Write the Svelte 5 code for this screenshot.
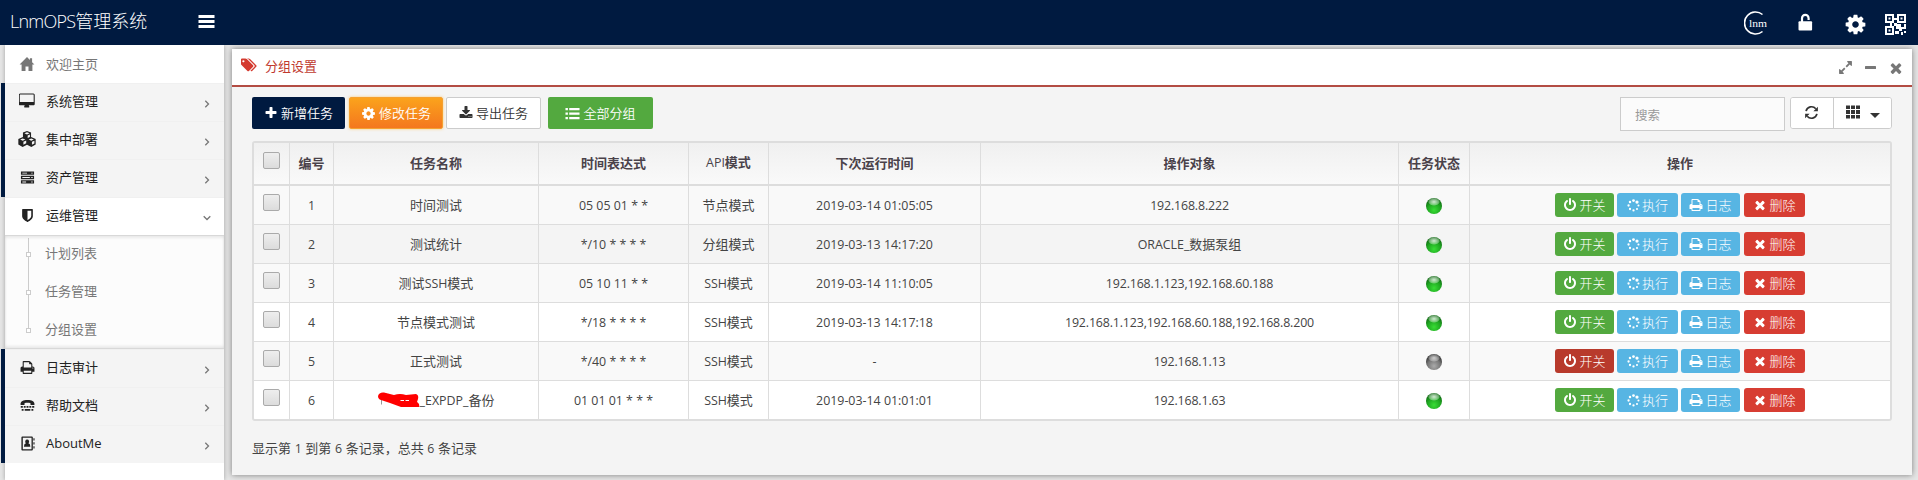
<script>
  const menu = [
    { icon: 'desktop', label: '系统管理' },
    { icon: 'cubes', label: '集中部署' },
    { icon: 'server', label: '资产管理' },
    { icon: 'shield', label: '运维管理', open: true, children: ['计划列表', '任务管理', '分组设置'] },
    { icon: 'print', label: '日志审计' },
    { icon: 'tty', label: '帮助文档' },
    { icon: 'book', label: 'AboutMe' }
  ];

  const columns = [
    { w: 44, t: '编号' },
    { w: 205, t: '任务名称' },
    { w: 150, t: '时间表达式' },
    { w: 80, t: 'API模式' },
    { w: 212, t: '下次运行时间' },
    { w: 418, t: '操作对象' },
    { w: 71, t: '任务状态' },
    { w: 420, t: '操作' }
  ];

  const rows = [
    { name: '时间测试', cron: '05 05 01 * *', mode: '节点模式', next: '2019-03-14 01:05:05', target: '192.168.8.222', on: true, bg: 'light' },
    { name: '测试统计', cron: '*/10 * * * *', mode: '分组模式', next: '2019-03-13 14:17:20', target: 'ORACLE_数据泵组', on: true, bg: 'hover' },
    { name: '测试SSH模式', cron: '05 10 11 * *', mode: 'SSH模式', next: '2019-03-14 11:10:05', target: '192.168.1.123,192.168.60.188', on: true, bg: 'light' },
    { name: '节点模式测试', cron: '*/18 * * * *', mode: 'SSH模式', next: '2019-03-13 14:17:18', target: '192.168.1.123,192.168.60.188,192.168.8.200', on: true, bg: 'plain' },
    { name: '正式测试', cron: '*/40 * * * *', mode: 'SSH模式', next: '-', target: '192.168.1.13', on: false, bg: 'light' },
    { name: '_EXPDP_备份', masked: true, cron: '01 01 01 * * *', mode: 'SSH模式', next: '2019-03-14 01:01:01', target: '192.168.1.63', on: true, bg: 'plain' }
  ];

  // Icons drawn on the 1792-unit grid
  const paths = {
    desktop: 'M1728 992v-832q0-13-9.5-22.5t-22.5-9.5h-1600q-13 0-22.5 9.5t-9.5 22.5v832q0 13 9.5 22.5t22.5 9.5h1600q13 0 22.5-9.5t9.5-22.5zm128-832v1088q0 66-47 113t-113 47h-544q0 37 16 77.5t32 71 16 43.5q0 26-19 45t-45 19h-512q-26 0-45-19t-19-45q0-14 16-44t32-70 16-78h-544q-66 0-113-47t-47-113v-1088q0-66 47-113t113-47h1600q66 0 113 47t47 113z',
    plus: 'M1600 736v192q0 40-28 68t-68 28h-416v416q0 40-28 68t-68 28h-192q-40 0-68-28t-28-68v-416h-416q-40 0-68-28t-28-68v-192q0-40 28-68t68-28h416v-416q0-40 28-68t68-28h192q40 0 68 28t28 68v416h416q40 0 68 28t28 68z',
    cog: 'M1152 896q0-106-75-181t-181-75-181 75-75 181 75 181 181 75 181-75 75-181zm512-109v222q0 12-8 23t-20 13l-185 28q-19 54-39 91 35 50 107 138 10 12 10 25t-9 23q-27 37-99 108t-94 71q-12 0-26-9l-138-108q-44 23-91 38-16 136-29 186-7 28-36 28h-222q-14 0-24.5-8.5t-11.5-21.5l-28-184q-49-16-90-37l-141 107q-10 9-25 9-14 0-25-11-126-114-165-168-7-10-7-23 0-12 8-23 15-21 51-66.5t54-70.5q-27-50-41-99l-183-27q-13-2-21-12.5t-8-23.5v-222q0-12 8-23t19-13l186-28q14-46 39-92-40-57-107-138-10-12-10-24 0-10 9-23 26-36 98.5-107.5t94.5-71.5q13 0 26 10l138 107q44-23 91-38 16-136 29-186 7-28 36-28h222q14 0 24.5 8.5t11.5 21.5l28 184q49 16 90 37l142-107q9-9 24-9 13 0 25 10 129 119 165 170 7 8 7 22 0 12-8 23-15 21-51 66.5t-54 70.5q26 50 41 98l183 28q13 2 21 12.5t8 23.5z',
    download: 'M1344 1344q0-26-19-45t-45-19-45 19-19 45 19 45 45 19 45-19 19-45zm256 0q0-26-19-45t-45-19-45 19-19 45 19 45 45 19 45-19 19-45zm128-224v320q0 40-28 68t-68 28h-1472q-40 0-68-28t-28-68v-320q0-40 28-68t68-28h465l135 136q58 56 136 56t136-56l136-136h464q40 0 68 28t28 68zm-325-569q17 41-14 70l-448 448q-18 19-45 19t-45-19l-448-448q-31-29-14-70 17-39 59-39h256v-448q0-26 19-45t45-19h256q26 0 45 19t19 45v448h256q42 0 59 39z',
    tags: 'M384 448q0-53-37.5-90.5t-90.5-37.5-90.5 37.5-37.5 90.5 37.5 90.5 90.5 37.5 90.5-37.5 37.5-90.5zm1067 576q0 53-37 90l-491 492q-39 37-91 37-53 0-90-37l-715-716q-38-37-64.5-101t-26.5-117v-416q0-52 38-90t90-38h416q53 0 117 26.5t102 64.5l715 714q37 39 37 91zm384 0q0 53-37 90l-491 492q-39 37-91 37-36 0-59-14t-53-45l470-470q37-37 37-90 0-52-37-91l-715-714q-38-38-102-64.5t-117-26.5h224q53 0 117 26.5t102 64.5l715 714q37 39 37 91z',
    times: 'M1490 1322q0 40-28 68l-136 136q-28 28-68 28t-68-28l-294-294-294 294q-28 28-68 28t-68-28l-136-136q-28-28-28-68t28-68l294-294-294-294q-28-28-28-68t28-68l136-136q28-28 68-28t68 28l294 294 294-294q28-28 68-28t68 28l136 136q28 28 28 68t-28 68l-294 294 294 294q28 28 28 68z',
    power: 'M1664 896q0 156-61 298t-164 245-245 164-298 61-298-61-245-164-164-245-61-298q0-182 80.5-343t226.5-270q43-32 95.5-25t83.5 50q32 42 24.5 94.5t-49.5 84.5q-98 74-151.5 181t-53.5 228q0 104 40.5 198.5t109.5 163.5 163.5 109.5 198.5 40.5 198.5-40.5 163.5-109.5 109.5-163.5 40.5-198.5q0-121-53.5-228t-151.5-181q-42-32-49.5-84.5t24.5-94.5q31-43 84-50t95 25q146 109 226.5 270t80.5 343zm-640-768v640q0 52-38 90t-90 38-90-38-38-90v-640q0-52 38-90t90-38 90 38 38 90z',
    print: 'M448 1536h896v-256h-896v256zm0-640h896v-384h-160q-40 0-68-28t-28-68v-160h-640v640zm1152 64q0-26-19-45t-45-19-45 19-19 45 19 45 45 19 45-19 19-45zm128 0v416q0 13-9.5 22.5t-22.5 9.5h-224v160q0 40-28 68t-68 28h-960q-40 0-68-28t-28-68v-160h-224q-13 0-22.5-9.5t-9.5-22.5v-416q0-79 56.5-135.5t135.5-56.5h64v-544q0-40 28-68t68-28h672q40 0 88 20t76 48l152 152q28 28 48 76t20 88v256h64q79 0 135.5 56.5t56.5 135.5z',
    shield: 'M1344 960v-640h-448v1137q119-63 213-137 235-184 235-360zm192-768v768q0 86-33.5 170.5t-83 150-118 127.5-126.5 103-121 77.5-89.5 49.5-42.5 20q-12 6-26 6t-26-6q-16-7-42.5-20t-89.5-49.5-121-77.5-126.5-103-118-127.5-83-150-33.5-170.5v-768q0-26 19-45t45-19h1152q26 0 45 19t19 45z',
    expand: 'M883 1056q0 13-10 23l-332 332 144 144q19 19 19 45t-19 45-45 19h-448q-26 0-45-19t-19-45v-448q0-26 19-45t45-19 45 19l144 144 332-332q10-10 23-10t23 10l114 114q10 10 10 23zm781-864v448q0 26-19 45t-45 19-45-19l-144-144-332 332q-10 10-23 10t-23-10l-114-114q-10-10-10-23t10-23l332-332-144-144q-19-19-19-45t19-45 45-19h448q26 0 45 19t19 45z'
  };

  // Icons drawn on a 16-unit grid
  const small = {
    home: 'M8 1 .6 8.6h2V15h3.9v-4.6h3V15h3.9V8.6h2l-2.3-2.4V2.2h-2.2v1.9z',
    server: 'M1 1.5h14v3.6H1zM1 6.2h14v3.6H1zM1 10.9h14v3.6H1zM2.5 2.8v1h5v-1zM12 2.8v1h1.5v-1zM2.5 7.5v1h8v-1zM12 7.5v1h1.5v-1zM2.5 12.2v1h4v-1zM12 12.2v1h1.5v-1z',
    tty: 'M8 2C3.500 2 .6 3.700.6 6v1.500h4.200V5.700C6.500 5 9.500 5 11.200 5.700v1.800h4.200V6C15.400 3.700 12.500 2 8 2zM.8 8.600h2.200v1.700H.8zM4 8.600h2v1.700H4zM7 8.600h2v1.700H7zM10 8.600h2v1.700h-2zM13 8.600h2.200v1.700H13zM1.800 11.800h2v1.700h-2zM5 11.800h6v1.700H5zM12.200 11.800h2v1.700h-2z',
    book: 'M2.500.5h10.200q1 0 1 1v13q0 1-1 1H2.500q-1 0-1-1v-13q0-1 1-1zM3 1.900v12.200h9.300V1.900zM14.300 2.500h1.200v2.300h-1.200zM14.300 6.700h1.200V9h-1.200zM14.300 10.900h1.200v2.300h-1.200zM7.650 3.700a2.100 2.300 0 0 1 1.300 4.100q2.100.4 2.100 3.700H4.200q0-3.300 2.100-3.700a2.100 2.300 0 0 1 1.350-4.100z',
    list: 'M.5 2h2.600v2.400H.5zM4.500 2h11v2.400h-11zM.5 6.800h2.600v2.400H.5zM4.500 6.800h11v2.400h-11zM.5 11.600h2.600V14H.5zM4.500 11.600h11V14h-11z',
    th: 'M1 1.500h4v3.500H1zM6 1.500h4v3.500H6zM11 1.500h4v3.500h-4zM1 6h4v4H1zM6 6h4v4H6zM11 6h4v4h-4zM1 11h4v3.500H1zM6 11h4v3.500H6zM11 11h4v3.500h-4z',
    cubes: 'M8 .8 11.600 2.300v4L15.700 8v4.800L11.900 15 8 13 4.100 15 .3 12.800V8l4.100-1.700v-4zM8 1.900 5.700 2.900 8 3.900l2.300-1zM8.600 4.900v2.200l2-.9V4zM4.200 7.500 1.900 8.500l2.300 1 2.300-1zM4.800 10.500v2.600l2.500-1.300V9.400zM11.800 7.500l-2.300 1 2.300 1 2.300-1zM12.400 10.500v2.600l2.200-1.200V9.500z'
  };

  const dots = [
    [8, 1.900, 1.700], [12.300, 3.700, 2], [14.100, 8, 1.300], [12.300, 12.300, 1.300],
    [8, 14.100, 1.400], [3.700, 12.300, 1.400], [1.900, 8, 1.400], [3.700, 3.700, 1.500]
  ];

  // Latin runs are set slightly smaller than the Chinese glyphs beside them
  const runs = (s) => s.match(/[\x00-\x7f]+|[^\x00-\x7f]+/g) ?? [];
  const isLatin = (s) => s.charCodeAt(0) < 128;
</script>

{#snippet ic(name, size = 14)}
  {#if paths[name]}
    <svg class="ic" width={size} height={size} viewBox={name === 'desktop' || name === 'tags' ? '-32 0 1920 1792' : '0 0 1792 1792'}><path fill-rule="evenodd" d={paths[name]} /></svg>
  {:else if name === 'spinner'}
    <svg class="ic" width={size} height={size} viewBox="0 0 16 16">
      {#each dots as [x, y, r]}<circle cx={x} cy={y} {r} />{/each}
    </svg>
  {:else if name === 'refresh'}
    <svg class="ic" width={size} height={size} viewBox="0 0 16 16">
      <path d="M2.200 6.500A6 6 0 0 1 12.600 4M13.800 9.500A6 6 0 0 1 3.400 12" fill="none" stroke="currentColor" stroke-width="1.800" />
      <path d="M14.800 1.800v4.800H10zM1.200 14.200V9.400H6z" />
    </svg>
  {:else}
    <svg class="ic" width={size} height={size} viewBox="0 0 16 16"><path fill-rule="evenodd" d={small[name]} /></svg>
  {/if}
{/snippet}

{#snippet txt(s)}<span>{#each runs(s) as r}{#if isLatin(r)}<span class="lat">{r}</span>{:else}{r}{/if}{/each}</span>{/snippet}

<div class="page">
  <header class="top">
    <div class="brand"><span class="brand-lat">LnmOPS</span>管理系统</div>
    <svg class="bars" width="17" height="14" viewBox="0 0 17 14"><path d="M.5 0h16v3H.5zM.5 5h16v3H.5zM.5 10h16v3H.5z" /></svg>
    <nav class="tools">
      <svg width="23" height="25" viewBox="0 0 23 25">
        <path d="M18.500 3.500A11 11 0 1 0 18.500 20.500" fill="none" stroke="#fff" stroke-width="1.600" />
        <text x="5" y="15.500" font-size="10.500" font-family="Liberation Serif, serif" textLength="18" lengthAdjust="spacingAndGlyphs">lnm</text>
      </svg>
      <svg class="lock" width="15" height="18" viewBox="0 0 15 18">
        <path d="M4 9V5.200a3.300 3.300 0 0 1 6.600 0V7" fill="none" stroke="#fff" stroke-width="2.200" />
        <path d="M1.500 8.200h11.600q1 0 1 1v7.400q0 1-1 1H1.500q-1 0-1-1V9.200q0-1 1-1z" />
      </svg>
      <span class="gear">{@render ic('cog', 23)}</span>
      <svg class="qr" width="21" height="21" viewBox="0 0 21 21">
        <path fill-rule="evenodd" d="M0 0h9v9H0zM2 2v5h5V2zM3.500 3.500h2v2h-2zM12 0h9v9h-9zM14 2v5h5V2zM15.500 3.500h2v2h-2zM0 12h9v9H0zM2 14v5h5v-5zM3.500 15.500h2v2h-2zM9 4h3v2H9zM9 9h3v3H9zM5 9h2v3H5zM12 10h4v3h3v-3h2v5h-4v2h-3v-2h-3v-3h1zM10 17h4v3h-4zM16 18h2v3h-2zM19 17h2v2h-2z" />
      </svg>
    </nav>
  </header>

  <div class="main">
    <aside class="side">
      <div class="home"><span class="slot">{@render ic('home', 16)}</span>欢迎主页</div>
      {#each menu as m}
        <div class="item" class:open={m.open}>
          <span class="slot">{@render ic(m.icon, m.icon === 'cubes' ? 18 : m.icon === 'desktop' ? 16 : 15)}</span>
          <span class="label">{m.label}</span>
          <svg class="chev" width="8" height="8" viewBox="0 0 8 8"><path d={m.open ? 'M.7 2.300 4 5.500 7.300 2.300' : 'M2.300.8 5.500 4 2.300 7.200'} /></svg>
        </div>
        {#if m.children}
          <ul class="sub">
            {#each m.children as c}<li><i class="node"></i>{c}</li>{/each}
          </ul>
        {/if}
      {/each}
    </aside>

    <section class="panel">
      <div class="phead">
        <span class="ptag">{@render ic('tags', 16)}</span>
        <h3>分组设置</h3>
        <div class="ptools">
          {@render ic('expand', 15)}
          <svg width="11" height="3"><rect width="11" height="3" rx=".5" /></svg>
          {@render ic('times', 16)}
        </div>
      </div>
      <div class="pbody">
        <div class="bar">
          <button class="btn navy">{@render ic('plus', 14)}新增任务</button>
          <button class="btn orange">{@render ic('cog', 15)}修改任务</button>
          <button class="btn white">{@render ic('download', 14)}导出任务</button>
          <button class="btn green">{@render ic('list', 15)}全部分组</button>
          <input class="search" placeholder="搜索" />
          <div class="grp">
            <button class="g1">{@render ic('refresh', 15)}</button>
            <button class="g2">{@render ic('th', 16)}<i class="caret"></i></button>
          </div>
        </div>

        <div class="frame">
          <table>
            <colgroup>
              <col style="width:36px" />
              {#each columns as c}<col style="width:{c.w}px" />{/each}
            </colgroup>
            <thead>
              <tr>
                <th><i class="chk"></i></th>
                {#each columns as c}<th>{@render txt(c.t)}</th>{/each}
              </tr>
            </thead>
            <tbody>
              {#each rows as r, i}
                <tr class={r.bg}>
                  <td><i class="chk"></i></td>
                  <td>{@render txt(String(i + 1))}</td>
                  <td>
                    {#if r.masked}
                      <svg class="mask" width="42" height="17" viewBox="0 0 42 17">
                        <path d="M3.500 6v6.500M3.500 8q1-2 3-2" stroke="#999" fill="none" />
                        <path d="M0 4Q1 0 6 .5L16 3Q22 1 28 3l10-1q3 1 2 5l-1 3q3 2 2 5H23L12 11 3 8Q0 7 0 4z" fill="#f00" />
                        <path d="M22.500 8.500h3.500m1.500 0h3.500" stroke="#fff" />
                      </svg>
                    {/if}{@render txt(r.name)}
                  </td>
                  <td>{@render txt(r.cron)}</td>
                  <td>{@render txt(r.mode)}</td>
                  <td>{@render txt(r.next)}</td>
                  <td class:addr={r.target.startsWith('192')}>{@render txt(r.target)}</td>
                  <td><i class="led" class:off={!r.on}></i></td>
                  <td>
                    <div class="ops">
                      <button class="op w59 {r.on ? 'go' : 'stop'}">{@render ic('power', 14)}开关</button>
                      <button class="op w61 info">{@render ic('spinner', 13)}执行</button>
                      <button class="op w59 info">{@render ic('print', 14)}日志</button>
                      <button class="op w61 del">{@render ic('times', 14)}删除</button>
                    </div>
                  </td>
                </tr>
              {/each}
            </tbody>
          </table>
        </div>
        <div class="count">{@render txt('显示第 1 到第 6 条记录，总共 6 条记录')}</div>
      </div>
    </section>
  </div>
</div>

<style>
  :global(body) { background: #e5e5e5; overflow: hidden; }
  * { box-sizing: border-box; }
  .page {
    height: 480px;
    overflow: hidden;
    display: flex;
    flex-direction: column;
    font: 13px/18px 'Open Sans', 'Noto Sans CJK SC', sans-serif;
    color: #444;
  }
  button, input { font: inherit; margin: 0; padding: 0; border: 0; white-space: nowrap; }
  .ic { display: block; flex: none; fill: currentColor; }
  .lat { font-size: 12.4px; }

  .top { flex: none; height: 45px; background: #001a40; color: #fff; display: flex; align-items: flex-start; position: relative; z-index: 2; }
  .top svg { fill: #fff; flex: none; }
  .brand { width: 198px; padding-left: 10px; font-size: 18px; line-height: 24px; padding-top: 9px; font-weight: 300; white-space: nowrap; }
  .brand-lat { letter-spacing: -0.75px; }
  .bars { margin-top: 15px; }
  .tools { margin-left: auto; display: flex; align-items: flex-start; padding: 11px 12px 0 0; }
  .lock { margin: 2px 0 0 31px; }
  .gear { margin: 2px 0 0 31px; }
  .qr { margin: 3px 0 0 18px; }

  .main { flex: 1; display: flex; min-height: 0; }
  .side { width: 219px; margin-left: 5px; background: #fff; flex: none; box-shadow: 0 0 4px rgba(0, 0, 0, .3); }
  .home, .item { height: 38px; display: flex; align-items: center; padding-left: 8px; }
  .home { color: #777; }
  .slot { width: 28px; margin-right: 5px; display: flex; justify-content: center; }
  .item { color: #222; background: #f4f4f4; box-shadow: inset 0 1px #f0f0f0; margin-left: -4px; border-left: 4px solid #001a40; padding-bottom: 2px; }
  .item.open { background: #fff; margin-left: 0; border-left: 0; }
  .label { flex: 1; }
  .chev { margin: 5px 13px 0 0; }
  .chev path { fill: none; stroke: #777; stroke-width: 1.300; }
  .sub {
    margin: 0; padding: 0; list-style: none; height: 114px;
    background: linear-gradient(#ccc, #ccc) 23px 2px / 1px 94px no-repeat, #fcfcfc;
    border-top: 1px solid #d8d8d8; border-bottom: 1px solid #d8d8d8;
    box-shadow: inset 0 2px 3px rgba(0, 0, 0, .08), inset 0 -2px 3px rgba(0, 0, 0, .08);
  }
  .sub li { height: 38px; display: flex; align-items: center; padding: 0 0 4px 21px; color: #777; }
  .node { width: 5px; height: 5px; border: 1px solid #ccc; background: #fff; margin: 2px 14px 0 0; }

  .panel { margin: 4px 6px 5px 8px; flex: 1; min-width: 0; background: #f4f4f4; box-shadow: 0 0 6px rgba(0, 0, 0, .45); }
  .phead { height: 38px; background: #fff; border-bottom: 2px solid #b34c43; display: flex; align-items: center; padding: 0 10px 2px 9px; color: #c0392f; }
  .ptag { width: 24px; color: #d43a2f; }
  .ptag .ic { margin-top: -2px; }
  h3 { margin: 0; font: inherit; flex: 1; }
  .ptools { display: flex; align-items: center; gap: 12px; color: #777; fill: #777; padding-top: 3px; margin-right: -2px; }
  .pbody { padding: 10px 20px 0; }
  .bar { display: flex; align-items: flex-start; height: 44px; }
  .btn { height: 32px; display: flex; align-items: center; justify-content: center; gap: 3px; color: #fff; border-radius: 2px; font-weight: 350; }
  .navy { width: 93px; background: #001a40; margin-right: 4px; }
  .orange { width: 94px; background: linear-gradient(#fba31c, #f4771e); border: 1px solid #f5a030; margin-right: 3px; box-shadow: 0 0 3px rgba(250, 190, 80, .8); }
  .white { width: 95px; background: #fff; border: 1px solid #ccc; color: #333; margin-right: 7px; }
  .green { width: 105px; background: #53a93f; }
  .search { margin-left: auto; width: 165px; height: 34px; border: 1px solid #ccc; background: #fbfbfb; padding: 2px 14px 0; outline: 0; font-size: 12.5px; }
  .search::placeholder { color: #999; opacity: 1; }
  .grp { display: flex; margin-left: 5px; width: 102px; height: 32px; border: 1px solid #ccc; border-radius: 3px; background: #fff; overflow: hidden; }
  .grp button { background: #fff; color: #333; display: flex; align-items: center; }
  .g1 { width: 43px; justify-content: center; border-right: 1px solid #ccc; padding: 0 2px 2px 0; }
  .g2 { flex: 1; padding: 0 0 2px 11px; }
  .caret { margin: 6px 0 0 9px; border: 5px solid transparent; border-top-color: #333; border-bottom: 0; }

  .frame { border: 2px solid #ddd; border-radius: 3px; overflow: hidden; }
  table { width: 1636px; table-layout: fixed; border-collapse: separate; border-spacing: 0; text-align: center; }
  th, td { padding: 0; border-right: 1px solid #ddd; white-space: nowrap; vertical-align: middle; }
  th { height: 43px; padding-bottom: 2px; border-bottom: 2px solid #ddd; font-weight: 700; color: #4a424a; }
  thead tr { background: linear-gradient(#f0f0f0, #fafafa); }
  th .lat { font-weight: 400; }
  td { height: 39px; border-bottom: 1px solid #ddd; }
  tbody tr:last-child td { height: 38px; border-bottom: 0; }
  th:last-child, td:last-child { border-right: 0; }
  .light { background: #f9f9f9; }
  .hover { background: #f4f4f4; }
  .plain { background: #fff; }
  .chk { display: block; width: 17px; height: 17px; margin: -5px auto 0; border: 1px solid #aaa; border-radius: 2px; background: linear-gradient(#eee, #dcdcdc); }
  .addr { letter-spacing: -0.15px; }
  .led {
    display: block; width: 16px; height: 16px; margin: 1px auto 0; border-radius: 50%;
    background: radial-gradient(ellipse 6px 4px at 50% 24%, rgba(255, 255, 255, .8), rgba(255, 255, 255, .35) 80%, transparent), radial-gradient(circle at 50% 75%, #38dd35 0, #1fa821 45%, #116b14 75%);
  }
  .led.off { background: radial-gradient(ellipse 6px 4px at 50% 24%, rgba(255, 255, 255, .7), rgba(255, 255, 255, .3) 80%, transparent), radial-gradient(circle at 50% 75%, #aaa 0, #777 45%, #333 75%); }
  .mask { vertical-align: -4px; }
  .ops { display: flex; justify-content: center; gap: 3px; }
  .op { height: 24px; border-radius: 3px; color: #fff; display: flex; align-items: center; justify-content: center; gap: 2px; font-weight: 300; }
  .w59 { width: 59px; }
  .w61 { width: 61px; }
  .go { background: #53a93f; }
  .stop { background: #b83a2c; }
  .info { background: #57b5e3; }
  .del { background: #d73d32; margin-left: 1px; }
  .count { margin-top: 18px; word-spacing: 0.4px; }
</style>
